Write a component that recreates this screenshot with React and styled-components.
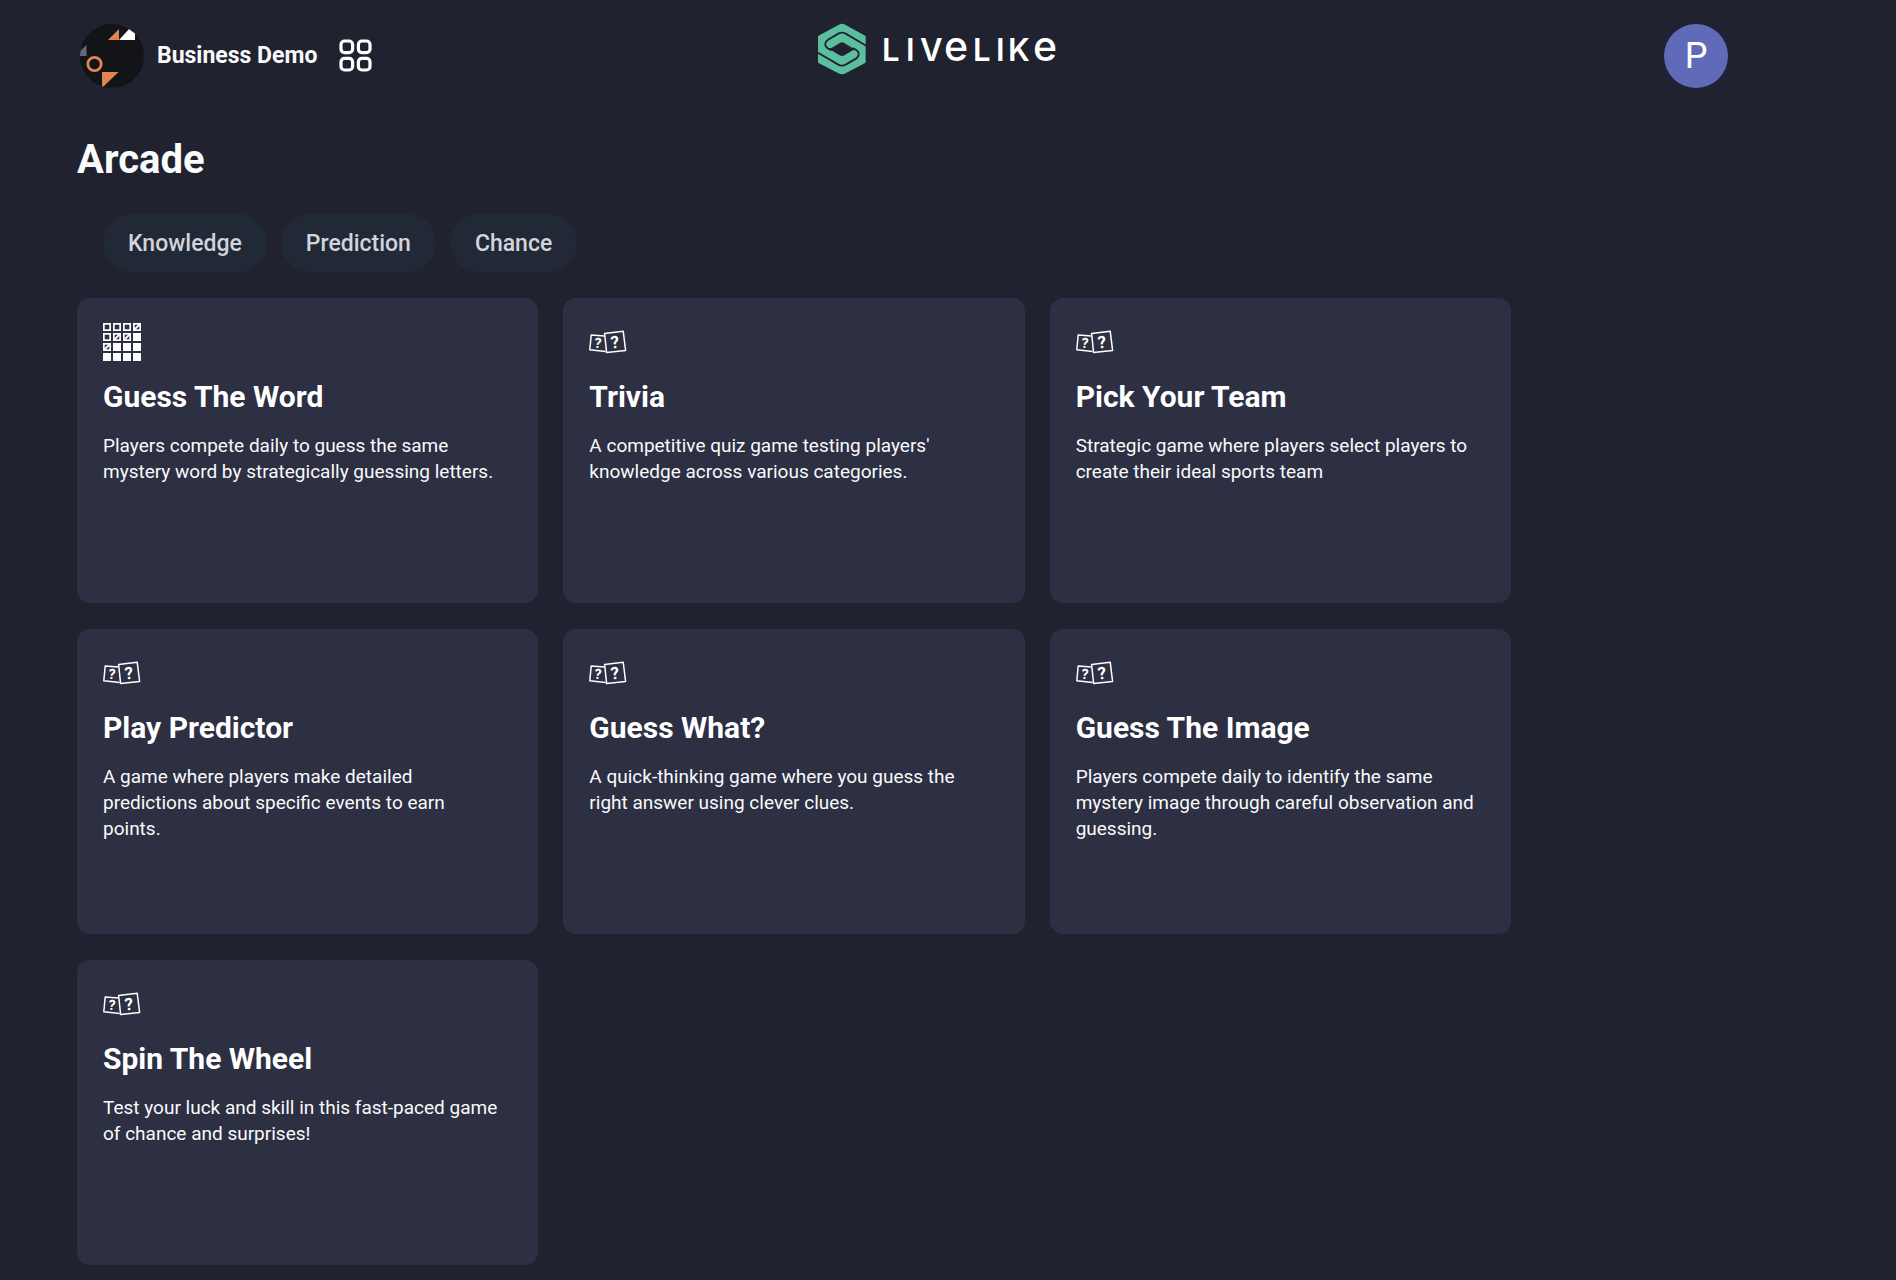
import React from "react";
import styled, { createGlobalStyle } from "styled-components";

const color = {
  page: "#212230",
  card: "#2d2f42",
  pill: "#222936",
  pillText: "#d1d5db",
  text: "#f9fafb",
  white: "#ffffff",
  orange: "#e08550",
  green: "#5abf9f",
  user: "#5f6bb8",
};

const GlobalStyle = createGlobalStyle`
  *, *::before, *::after { box-sizing: border-box; }
  body {
    margin: 0;
    background: ${color.page};
    color: ${color.text};
    font-family: Roboto, "Liberation Sans", sans-serif;
  }
  h1, h2, p { margin: 0; }
  button {
    border: 0;
    padding: 0;
    background: none;
    color: inherit;
    font: inherit;
    cursor: pointer;
  }
  svg { display: block; }
`;

const Header = styled.header`
  display: grid;
  grid-template-columns: 11fr auto 10fr;
  align-items: center;
  padding: 16px 168px 0 80px;
`;

const Brand = styled.div`
  display: flex;
  align-items: center;
  padding-top: 8px;
`;

const BrandName = styled.span`
  margin: 0 22px 0 13px;
  font-size: 23px;
  line-height: 32px;
  font-weight: 700;
  white-space: nowrap;
`;

const IconButton = styled.button`
  display: flex;
`;

const LogoLink = styled.a`
  color: ${color.white};
`;

const UserButton = styled.button`
  justify-self: end;
  width: 64px;
  height: 64px;
  margin-top: 8px;
  border-radius: 50%;
  background: ${color.user};
  color: ${color.white};
  font-size: 36px;
  line-height: 64px;
  text-align: center;
`;

const Main = styled.main`
  padding: 48px 77px 14px;
`;

const PageTitle = styled.h1`
  font-size: 40px;
  line-height: 48px;
  font-weight: 700;
`;

const Filters = styled.div`
  display: flex;
  flex-wrap: wrap;
  gap: 14px;
  margin-top: 30px;
  padding-left: 26px;
`;

const Pill = styled.button`
  padding: 14px 25px 12px;
  border-radius: 29px;
  background: ${color.pill};
  color: ${color.pillText};
  font-size: 23px;
  line-height: 32px;
  font-weight: 500;
`;

const Games = styled.section`
  display: grid;
  grid-template-columns: repeat(3, minmax(0, 1fr));
  gap: 26px 25px;
  max-width: 1434px;
  margin-top: 26px;
`;

const Card = styled.article`
  display: flex;
  flex-direction: column;
  gap: 16px;
  min-height: 305px;
  padding: 25px 32px 25px 26px;
  border-radius: 13px;
  background: ${color.card};
`;

const CardTitle = styled.h2`
  color: ${color.white};
  font-size: 30px;
  line-height: 40px;
  font-weight: 700;
`;

const CardText = styled.p`
  font-size: 19px;
  line-height: 26px;
`;

function BrandMark() {
  return (
    <svg width="64" height="64" viewBox="0 0 64 64" aria-hidden="true">
      <clipPath id="brand-clip"><circle cx="32" cy="32" r="32" /></clipPath>
      <g clipPath="url(#brand-clip)">
        <rect width="64" height="64" fill="#131418" />
        <path d="M28 16L39 5V16Z" fill={color.orange} />
        <path d="M39 16L50 4H55V16Z" fill={color.white} />
        <path d="M-1 28L6.5 21V32H-1Z" fill="#666774" />
        <circle cx="14.5" cy="40" r="6.7" fill="none" stroke={color.orange} strokeWidth="2.8" />
        <path d="M22 48H38.5L22 64Z" fill={color.orange} />
      </g>
    </svg>
  );
}

function AppsIcon() {
  return (
    <svg width="34" height="34" viewBox="0 0 34 34" fill="none" stroke={color.white} strokeWidth="3.2" aria-hidden="true">
      <rect x="2" y="2" width="11.6" height="11.6" rx="3.5" />
      <rect x="19.4" y="2" width="11.6" height="11.6" rx="3.5" />
      <rect x="2" y="19.4" width="11.6" height="11.6" rx="3.5" />
      <rect x="19.4" y="19.4" width="11.6" height="11.6" rx="3.5" />
    </svg>
  );
}

const swirl = "M161 78L98 41Q87 35 76 41L45 59Q36 65 37 76Q39 84 55 91";

function Logo() {
  return (
    <svg width="240" height="72" viewBox="0 -8 240 72" role="img" aria-label="LiveLike">
      <g transform="translate(-5 -4) scale(0.3333)">
        <path
          d="M79 17Q87 12 95 17L155 50V126L95 158Q87 162 79 158L18 126V50Z"
          fill={color.green}
          stroke={color.green}
          strokeWidth="6"
          strokeLinejoin="round"
        />
        <path
          d="M40 80Q48 88 57 83L80 69Q87 65 94 69L122 86Q132 91 134 95Q126 87 117 92L94 106Q87 110 80 106L52 89Q42 84 40 80Z"
          fill={color.page}
        />
        <g fill="none" stroke={color.page} strokeWidth="5.5">
          <path d={swirl} />
          <path d={swirl} transform="rotate(180 87 87.5)" />
        </g>
      </g>
      <g fill={color.white} fontFamily="Inter, sans-serif" fontSize="31" fontWeight="600">
        <text y="37" x="64 88 102">LIV</text>
        <text y="37" x="126" fontSize="41" fontWeight="500">e</text>
        <text y="37" x="155 178 190">LIK</text>
        <text y="37" x="215" fontSize="41" fontWeight="500">e</text>
      </g>
    </svg>
  );
}

const wordRows = ["oood", "oddf", "dfff", "ffff"];

function WordGridIcon() {
  return (
    <svg width="38" height="38" viewBox="0 0 38 38" aria-hidden="true">
      {wordRows.flatMap((row, r) =>
        [...row].map((kind, c) => (
          <g key={`${r}-${c}`} transform={`translate(${c * 10} ${r * 10})`}>
            <rect width="8" height="8" fill={color.white} />
            {kind !== "f" && <rect x="1.7" y="1.7" width="4.6" height="4.6" fill={color.card} />}
            {kind === "d" && <path d="M1 7L7 1" stroke={color.white} strokeWidth="1.8" />}
          </g>
        ))
      )}
    </svg>
  );
}

function QuestionCardsIcon() {
  return (
    <svg width="38" height="38" viewBox="0 0 38 38" aria-hidden="true">
      <g fill="none" stroke={color.white} strokeWidth="1.5" strokeLinejoin="round">
        <path d="M15.6 13L2.2 12L0.8 26.8L16.6 28.4" />
        <path d="M15.6 10.4L34.2 8.2L36.6 27.4L17.6 29.6Z" />
      </g>
      <g fill={color.white} fontFamily="Roboto, sans-serif" fontWeight="700" textAnchor="middle">
        <text x="9" y="25" fontSize="14" transform="rotate(6 9 20)">?</text>
        <text x="25.8" y="25" fontSize="17" transform="rotate(-6 26 19)">?</text>
      </g>
    </svg>
  );
}

const filters = ["Knowledge", "Prediction", "Chance"];

const games = [
  {
    title: "Guess The Word",
    text: "Players compete daily to guess the same mystery word by strategically guessing letters.",
    Icon: WordGridIcon,
  },
  {
    title: "Trivia",
    text: "A competitive quiz game testing players' knowledge across various categories.",
    Icon: QuestionCardsIcon,
  },
  {
    title: "Pick Your Team",
    text: "Strategic game where players select players to create their ideal sports team",
    Icon: QuestionCardsIcon,
  },
  {
    title: "Play Predictor",
    text: "A game where players make detailed predictions about specific events to earn points.",
    Icon: QuestionCardsIcon,
  },
  {
    title: "Guess What?",
    text: "A quick-thinking game where you guess the right answer using clever clues.",
    Icon: QuestionCardsIcon,
  },
  {
    title: "Guess The Image",
    text: "Players compete daily to identify the same mystery image through careful observation and guessing.",
    Icon: QuestionCardsIcon,
  },
  {
    title: "Spin The Wheel",
    text: "Test your luck and skill in this fast-paced game of chance and surprises!",
    Icon: QuestionCardsIcon,
  },
];

export default function App() {
  return (
    <>
      <GlobalStyle />
      <Header>
        <Brand>
          <BrandMark />
          <BrandName>Business Demo</BrandName>
          <IconButton type="button" aria-label="Apps">
            <AppsIcon />
          </IconButton>
        </Brand>
        <LogoLink href="#" aria-label="LiveLike home">
          <Logo />
        </LogoLink>
        <UserButton type="button" aria-label="Account">P</UserButton>
      </Header>
      <Main>
        <PageTitle>Arcade</PageTitle>
        <Filters>
          {filters.map((name) => (
            <Pill key={name} type="button">{name}</Pill>
          ))}
        </Filters>
        <Games>
          {games.map(({ title, text, Icon }) => (
            <Card key={title}>
              <Icon />
              <CardTitle>{title}</CardTitle>
              <CardText>{text}</CardText>
            </Card>
          ))}
        </Games>
      </Main>
    </>
  );
}
